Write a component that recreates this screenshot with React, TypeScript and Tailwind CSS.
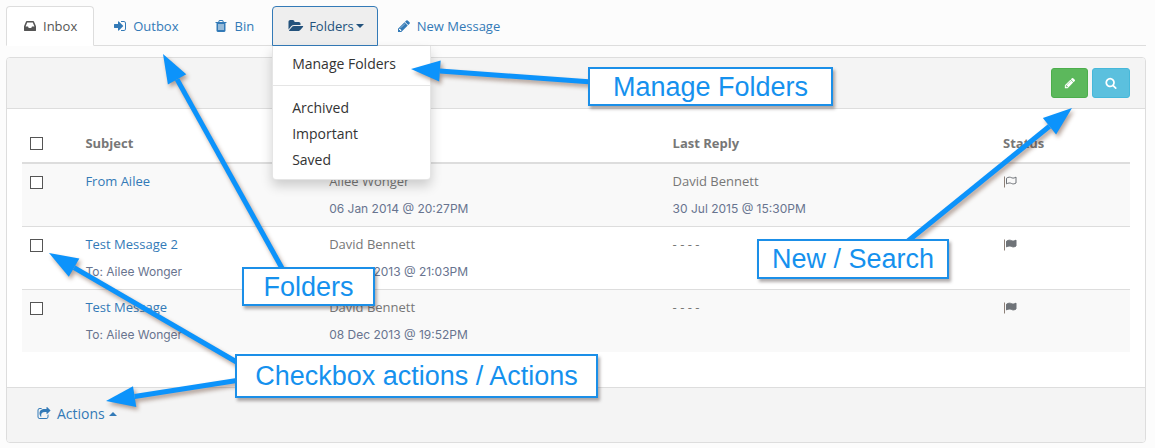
import React from "react";

const ICONS = {
  inbox:
    "M1151 960h316q-1-3-2.5-8.5t-2.5-7.5l-212-496h-708l-212 496q-1 3-2.5 8.5t-2.5 7.5h316l95 192h320zm513 30v482q0 26-19 45t-45 19h-1408q-26 0-45-19t-19-45v-482q0-62 25-123l238-552q10-25 36.5-42t52.5-17h832q26 0 52.5 17t36.5 42l238 552q25 61 25 123z",
  signIn:
    "M1312 896q0 26-19 45l-544 544q-19 19-45 19t-45-19-19-45v-288h-448q-26 0-45-19t-19-45v-384q0-26 19-45t45-19h448v-288q0-26 19-45t45-19 45 19l544 544q19 19 19 45zm352-352v704q0 119-84.5 203.5t-203.5 84.5h-320q-13 0-22.5-9.5t-9.5-22.5q0-4-1-20t-.5-26.5 3-23.5 10-19.5 20.5-6.5h320q66 0 113-47t47-113v-704q0-66-47-113t-113-47h-312l-11.5-1-11.5-3-8-5.5-7-9-2-13.5q0-4-1-20t-.5-26.5 3-23.5 10-19.5 20.5-6.5h320q119 0 203.5 84.5t84.5 203.5z",
  trash:
    "M704 1376v-704q0-14-9-23t-23-9h-64q-14 0-23 9t-9 23v704q0 14 9 23t23 9h64q14 0 23-9t9-23zm256 0v-704q0-14-9-23t-23-9h-64q-14 0-23 9t-9 23v704q0 14 9 23t23 9h64q14 0 23-9t9-23zm256 0v-704q0-14-9-23t-23-9h-64q-14 0-23 9t-9 23v704q0 14 9 23t23 9h64q14 0 23-9t9-23zm-544-992h448l-48-117q-7-9-17-11h-317q-10 2-17 11zm928 32v64q0 14-9 23t-23 9h-96v948q0 83-47 143.5t-113 60.5h-832q-66 0-113-58.5t-47-141.5v-952h-96q-14 0-23-9t-9-23v-64q0-14 9-23t23-9h309l70-167q15-37 54-63t79-26h320q40 0 79 26t54 63l70 167h309q14 0 23 9t9 23z",
  folderOpen:
    "M1815 952q0 31-31 66l-336 396q-43 51-120.5 86.5t-143.5 35.5h-1088q-34 0-60.5-13t-26.5-43q0-31 31-66l336-396q43-51 120.5-86.5t143.5-35.5h1088q34 0 60.5 13t26.5 43zm-343-344v160h-832q-94 0-197 47.5t-164 119.5l-337 396-5 6q0-4-.5-12.5t-.5-12.5v-960q0-92 66-158t158-66h320q92 0 158 66t66 158v32h544q92 0 158 66t66 158z",
  pencil:
    "M491 1536l91-91-235-235-91 91v107h128v128h107zm523-928q0-22-22-22-10 0-17 7l-542 542q-7 7-7 17 0 22 22 22 10 0 17-7l542-542q7-7 7-17zm-54-192l416 416-832 832h-416v-416zm683 96q0 53-37 90l-166 166-416-416 166-165q36-38 90-38 53 0 91 38l235 234q37 39 37 91z",
  search:
    "M1216 832q0-185-131.5-316.5t-316.5-131.5-316.5 131.5-131.5 316.5 131.5 316.5 316.5 131.5 316.5-131.5 131.5-316.5zm512 832q0 52-38 90t-90 38q-54 0-90-38l-343-342q-179 124-399 124-143 0-273.5-55.5t-225-150-150-225-55.5-273.5 55.5-273.5 150-225 225-150 273.5-55.5 273.5 55.5 225 150 150 225 55.5 273.5q0 220-124 399l343 343q37 37 37 90z",
  share:
    "M1472 989v259q0 119-84.5 203.5t-203.5 84.5h-832q-119 0-203.5-84.5t-84.5-203.5v-832q0-119 84.5-203.5t203.5-84.5h255q13 0 22.5 9.5t9.5 22.5q0 27-26 32-77 26-133 60-10 4-16 4h-112q-66 0-113 47t-47 113v832q0 66 47 113t113 47h832q66 0 113-47t47-113v-214q0-19 18-29 28-13 54-37 16-16 35-8 21 9 21 29zm237-496l-384 384q-18 19-45 19-12 0-25-5-39-17-39-59v-192h-160q-323 0-438 131-119 137-74 473 3 23-20 34-8 2-12 2-16 0-26-13-10-14-21-31t-39.5-68.5-49.5-99.5-38.5-114-17.5-122q0-49 3.5-91t14-90 28-88 47-81.5 68.5-74 94.5-61.5 124.5-48.5 159.5-30.5 196.5-11h160v-192q0-42 39-59 13-5 25-5 26 0 45 19l384 384q19 19 19 45t-19 45z",
};

function Icon({ name, className = "size-[14px]" }: { name: keyof typeof ICONS; className?: string }) {
  return (
    <svg viewBox="0 0 1792 1792" className={`shrink-0 overflow-visible ${className}`} fill="currentColor" aria-hidden="true">
      <path d={ICONS[name]} />
    </svg>
  );
}

function Flag({ filled }: { filled: boolean }) {
  return (
    <svg viewBox="0 0 14 14" className="size-[14px] text-[#6f7378]" role="img" aria-label={filled ? "Unread" : "Read"}>
      <path d="M1.5 1.5V12.5" stroke="#8d8078" fill="none" />
      <path
        d="M3.5 3.2C5.5 1.9 7 1.9 8.8 2.8C10.4 3.5 11.6 2.9 13 2.1V8C11.5 8.9 10.2 9.3 8.6 8.5C6.8 7.6 5.3 7.9 3.5 8.9Z"
        fill={filled ? "currentColor" : "none"}
        stroke="currentColor"
      />
    </svg>
  );
}

const TAB = "flex h-10 cursor-pointer items-center gap-1.5 rounded-t-[4px] border";

type Message = { subject: string; to?: string; from: string; sent: string; reply?: [string, string]; unread: boolean };

const MESSAGES: Message[] = [
  { subject: "From Ailee", from: "Ailee Wonger", sent: "06 Jan 2014 @ 20:27PM", reply: ["David Bennett", "30 Jul 2015 @ 15:30PM"], unread: false },
  { subject: "Test Message 2", to: "Ailee Wonger", from: "David Bennett", sent: "08 Dec 2013 @ 21:03PM", unread: true },
  { subject: "Test Message", to: "Ailee Wonger", from: "David Bennett", sent: "08 Dec 2013 @ 19:52PM", unread: true },
];

const CHECK = "block size-[13px] appearance-none border border-[#555] bg-white checked:bg-[#337ab7]";
const META = "mt-2 block font-[Inter,sans-serif] text-[12px] text-[#68748f]";
const NOTE =
  "absolute flex items-center justify-center whitespace-nowrap border-2 border-[#1b8fe8] bg-white font-['Liberation_Sans',Arial,sans-serif] text-[27px] leading-8 text-[#1591ee] shadow-[2px_3px_3px_rgba(60,50,50,0.4)]";

function Arrow({ from, to }: { from: [number, number]; to: [number, number] }) {
  const dx = to[0] - from[0];
  const dy = to[1] - from[1];
  const n = Math.hypot(dx, dy);
  const ux = dx / n;
  const uy = dy / n;
  const bx = to[0] - ux * 29;
  const by = to[1] - uy * 29;
  const points = [to, [bx - uy * 10.5, by + ux * 10.5], [bx + uy * 10.5, by - ux * 10.5]].map((p) => p.join(",")).join(" ");
  return (
    <g>
      <line x1={from[0]} y1={from[1]} x2={bx} y2={by} stroke="#0c93fb" strokeWidth="5" />
      <polygon points={points} fill="#0c93fb" />
    </g>
  );
}

function Callouts() {
  return (
    <div className="pointer-events-none absolute inset-0 z-20">
      <svg className="absolute inset-0 size-full overflow-visible drop-shadow-[2px_3px_2px_rgba(90,50,30,0.45)]" aria-hidden="true">
        <Arrow from={[283, 270]} to={[163, 54]} />
        <Arrow from={[592, 82]} to={[411, 69]} />
        <Arrow from={[908, 241]} to={[1072, 108]} />
        <Arrow from={[240, 364]} to={[49, 253]} />
        <Arrow from={[240, 380]} to={[106, 401]} />
      </svg>
      <div className={`${NOTE} left-[588px] top-[67px] h-[39px] w-[245px]`}>Manage Folders</div>
      <div className={`${NOTE} left-[757px] top-[239px] h-10 w-[192px]`}>New / Search</div>
      <div className={`${NOTE} left-[242px] top-[267px] h-[39px] w-[133px]`}>Folders</div>
      <div className={`${NOTE} left-[235px] top-[354px] h-11 w-[363px]`}>Checkbox actions / Actions</div>
    </div>
  );
}

export default function App() {
  return (
    <div className="relative min-h-screen bg-[#fcfcfc] pr-[9px] pb-1 pl-1.5 pt-1.5 font-['Open_Sans',sans-serif] text-[13px] leading-5 text-[#777]">
      <nav className="flex gap-0.5 border-b border-[#ddd] text-[#337ab7]">
        <a href="#inbox" className={`${TAB} -mb-px border-[#ddd] border-b-white bg-white px-4 text-[#555]`}>
          <Icon name="inbox" />
          Inbox
        </a>
        <a href="#outbox" className={`${TAB} -mb-px border-transparent px-4`}>
          <Icon name="signIn" />
          Outbox
        </a>
        <a href="#bin" className={`${TAB} -mb-px border-transparent pl-4 pr-[15px]`}>
          <Icon name="trash" />
          Bin
        </a>
        <div className="relative -mb-px">
          <button type="button" aria-expanded="true" className={`${TAB} border-[#337ab7] bg-[#eee] pl-4 pr-[13px] text-[#23527c]`}>
            <Icon name="folderOpen" />
            <span className="flex items-center gap-0.5">
              Folders
              <span className="border-x-4 border-t-4 border-x-transparent border-t-current" />
            </span>
          </button>
          <ul className="absolute left-0 top-full z-10 w-[159px] rounded-b-[4px] border-x border-b border-black/10 bg-white pb-1.5 pt-[5px] text-[14px] text-[#333] shadow-[0_6px_12px_rgba(0,0,0,0.18)]">
            <li>
              <a href="#manage" className="block whitespace-nowrap px-[19px] py-[3px]">Manage Folders</a>
            </li>
            <li className="mb-[9px] mt-2 h-px bg-[#e5e5e5]" />
            {["Archived", "Important", "Saved"].map((f) => (
              <li key={f}>
                <a href={`#${f}`} className="block px-[19px] py-[3px]">{f}</a>
              </li>
            ))}
          </ul>
        </div>
        <a href="#new" className={`${TAB} -mb-px border-transparent px-4`}>
          <Icon name="pencil" />
          New Message
        </a>
      </nav>

      <section className="mt-[11px] rounded-[4px] border border-[#ddd] bg-white">
        <header className="flex justify-end gap-1 rounded-t-[3px] border-b border-[#ddd] bg-[#f4f4f4] px-[15px] py-2.5">
          <button type="button" aria-label="New message" className="flex h-[30px] w-[37px] items-center justify-center rounded-[3px] border border-[#4cae4c] bg-[#5cb85c] text-white">
            <Icon name="pencil" className="size-3" />
          </button>
          <button type="button" aria-label="Search" className="flex h-[30px] w-[38px] items-center justify-center rounded-[3px] border border-[#46b8da] bg-[#5bc0de] text-white">
            <Icon name="search" className="size-3" />
          </button>
        </header>

        <div className="px-[15px] pb-[35px] pt-[15px]">
          <table className="w-full table-fixed border-collapse text-left">
            <colgroup>
              <col className="w-[5%]" />
              <col className="w-[22%]" />
              <col className="w-[31%]" />
              <col />
              <col className="w-[135px]" />
            </colgroup>
            <thead>
              <tr className="h-[39px] border-b-2 border-[#ddd] font-bold">
                <th className="px-2"><input type="checkbox" aria-label="Select all" className={CHECK} /></th>
                <th className="px-2">Subject</th>
                <th className="px-2" />
                <th className="px-2">Last Reply</th>
                <th className="px-2">Status</th>
              </tr>
            </thead>
            <tbody>
              {MESSAGES.map((m) => (
                <tr key={m.sent} className="h-[63px] border-t border-[#ddd] align-top odd:bg-[#f9f9f9]">
                  <td className="px-2 pt-3"><input type="checkbox" aria-label={`Select ${m.subject}`} className={CHECK} /></td>
                  <td className="px-2 pt-[7px]">
                    <a href="#message" className="block text-[#337ab7]">{m.subject}</a>
                    {m.to && <span className={META}>To: {m.to}</span>}
                  </td>
                  <td className="px-2 pt-[7px]">
                    <span className="block">{m.from}</span>
                    <span className={META}>{m.sent}</span>
                  </td>
                  <td className="px-2 pt-[7px]">
                    <span className="block">{m.reply ? m.reply[0] : "- - - -"}</span>
                    {m.reply && <span className={META}>{m.reply[1]}</span>}
                  </td>
                  <td className="px-2 pt-[11px]"><Flag filled={m.unread} /></td>
                </tr>
              ))}
            </tbody>
          </table>
        </div>

        <footer className="rounded-b-[3px] border-t border-[#ddd] bg-[#f4f4f4] px-[30px] pb-[18px] pt-4">
          <button type="button" className="flex items-center gap-1.5 text-[14px] text-[#337ab7]">
            <Icon name="share" />
            <span className="flex items-center gap-1">
              Actions
              <span className="border-x-4 border-b-4 border-x-transparent border-b-current" />
            </span>
          </button>
        </footer>
      </section>
      <Callouts />
    </div>
  );
}
